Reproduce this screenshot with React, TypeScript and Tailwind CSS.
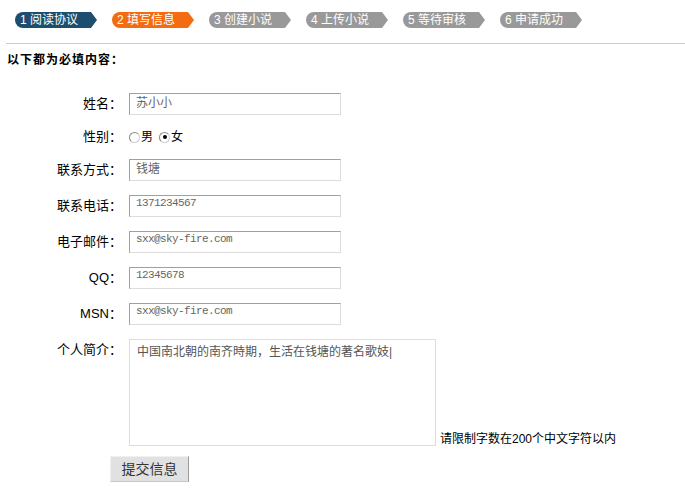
import React from "react";

const steps = [
  { label: "1 阅读协议", bg: "bg-[#1e4e6e]" },
  { label: "2 填写信息", bg: "bg-[#f36c12]" },
  { label: "3 创建小说", bg: "bg-[#999999]" },
  { label: "4 上传小说", bg: "bg-[#999999]" },
  { label: "5 等待审核", bg: "bg-[#999999]" },
  { label: "6 申请成功", bg: "bg-[#999999]" },
];

const fields = [
  { label: "姓名：", value: "苏小小", mono: false },
  { label: "联系方式：", value: "钱塘", mono: false },
  { label: "联系电话：", value: "1371234567", mono: true },
  { label: "电子邮件：", value: "sxx@sky-fire.com", mono: true },
  { label: "QQ：", value: "12345678", mono: true },
  { label: "MSN：", value: "sxx@sky-fire.com", mono: true },
];

const Label = ({ text }: { text: string }) => (
  <div className="w-[122px] shrink-0 text-right text-[13px] leading-[22px] h-[22px] text-black">
    {text}
  </div>
);

const TextField = ({ label, value, mono }: { label: string; value: string; mono: boolean }) => (
  <div className="flex h-[22px]">
    <Label text={label} />
    <input
      readOnly
      value={value}
      className={
        "ml-[7px] w-[212px] h-[22px] box-border border border-t-[#a0a0a0] border-l-[#a0a0a0] border-r-[#dcdcdc] border-b-[#dcdcdc] pl-[6px] pt-[1px] pb-[7px] leading-[12px] text-[#666] outline-none " +
        (mono ? "font-['Liberation_Mono',monospace] text-[11px] tracking-[-0.6px]" : "text-[12px]")
      }
    />
  </div>
);

const Radio = ({ checked }: { checked?: boolean }) => (
  <span className="w-[11px] h-[11px] rounded-full border border-t-[#888] border-l-[#888] border-r-[#ccc] border-b-[#ccc] bg-white flex items-center justify-center">
    {checked && <span className="w-[4px] h-[4px] rounded-full bg-black" />}
  </span>
);

export default function App() {
  const [name, ...rest] = fields;

  return (
    <div className="w-[685px] h-[488px] bg-white overflow-hidden font-['Liberation_Sans','Noto_Sans_CJK_SC',sans-serif]">
      {/* step indicator */}
      <div className="flex gap-[15px] pl-[15px] pt-[12px]">
        {steps.map((s) => (
          <div
            key={s.label}
            className={`${s.bg} w-[82px] h-[16px] rounded-l-[8px] pl-[5px] text-white text-[12px] leading-[16px] [clip-path:polygon(0_0,76px_0,82px_50%,76px_100%,0_100%)]`}
          >
            {s.label}
          </div>
        ))}
      </div>

      <div className="mt-[15px] ml-[6px] h-px bg-[#cccccc]" />

      <div className="ml-[7px] mt-[9px] text-[12px] leading-[14px] tracking-[1px] font-bold text-black">
        以下都为必填内容：
      </div>

      <div className="mt-[26px] flex flex-col gap-[14px]">
        <TextField {...name} />

        <div className="flex h-[16px] items-center">
          <div className="w-[122px] text-right text-[13px] leading-[16px]">性别：</div>
          <div className="ml-[7px] flex items-center text-[12px] leading-[16px]">
            <Radio />
            <span className="ml-[1px]">男</span>
            <span className="ml-[6px]"><Radio checked /></span>
            <span className="ml-[1px]">女</span>
          </div>
        </div>

        {rest.map((f) => (
          <TextField key={f.label} {...f} />
        ))}

        <div className="flex items-end">
          <div className="self-start">
            <Label text="个人简介：" />
          </div>
          <textarea
            readOnly
            value="中国南北朝的南齐時期，生活在钱塘的著名歌妓|"
            className="ml-[7px] w-[307px] h-[107px] box-border border border-[#dddddd] px-[7px] pt-[4px] text-[12px] leading-[16px] text-[#555] resize-none outline-none"
          />
          <div className="ml-[4px] text-[12px] leading-[14px] text-black">
            请限制字数在200个中文字符以内
          </div>
        </div>
      </div>

      <div className="mt-[10px] ml-[110px]">
        <button className="w-[79px] h-[26px] bg-[#e1e1e1] border border-t-[#f0f0f0] border-l-[#f0f0f0] border-r-[#9a9a9a] border-b-[#c8c8c8] text-[14px] leading-[24px] text-[#333]">
          提交信息
        </button>
      </div>
    </div>
  );
}
